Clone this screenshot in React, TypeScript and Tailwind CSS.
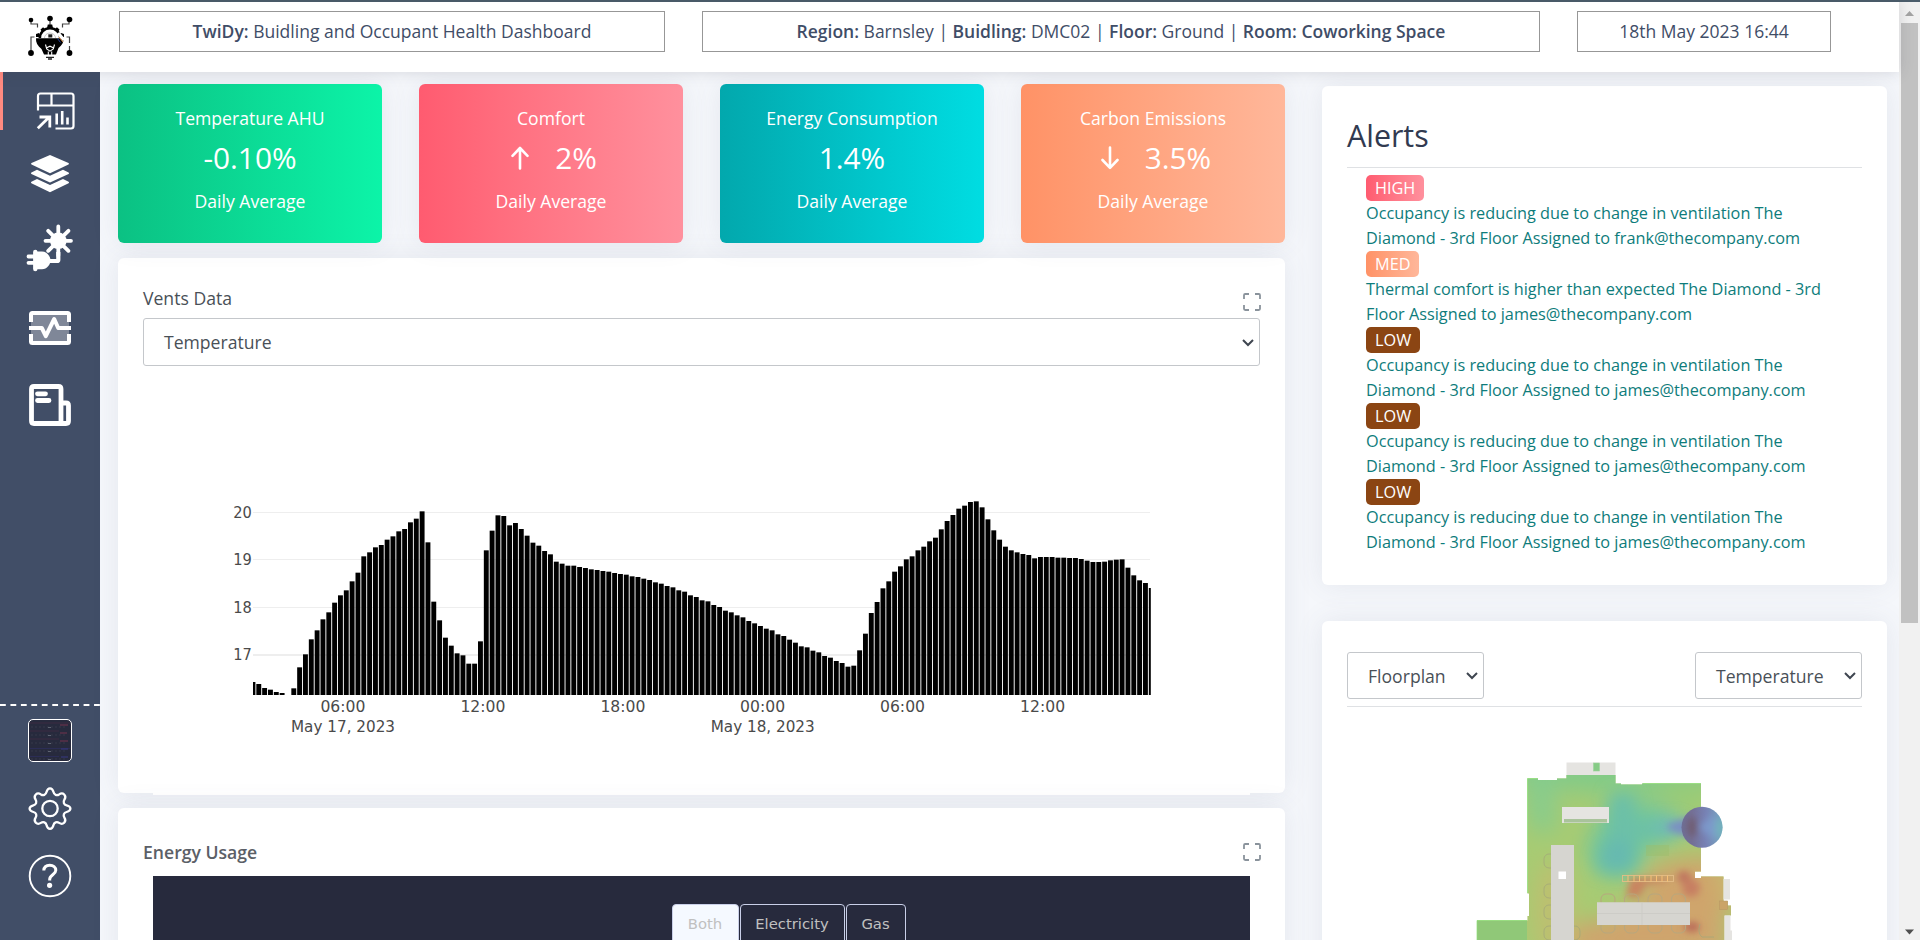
import React from "react";

const BAR_TOPS: (number | null)[] = [
  606, 612, 624, 629, 636, 639, null, 625, 562, 523, 478, 451, 418, 397, 368, 346, 331, 304, 278, 229, 217, 202, 195, 179,
  169, 154, 147, 127, 116, 94, 187, 365, 421, 473, 497, 520, 526, 551, 551, 484, 211, 152, 106, 108, 136, 129, 147, 167,
  188, 197, 213, 223, 245, 251, 257, 257, 261, 264, 268, 270, 273, 275, 279, 282, 284, 289, 291, 296, 300, 307, 311, 318,
  322, 331, 335, 346, 351, 361, 364, 375, 381, 392, 397, 406, 412, 423, 430, 438, 446, 451, 463, 468, 479, 488, 499, 502,
  512, 517, 528, 533, 543, 549, 560, 557, 511, 461, 399, 366, 325, 304, 275, 259, 238, 229, 211, 200, 184, 173, 148, 123,
  105, 86, 77, 66, 64, 82, 118, 151, 179, 200, 211, 217, 222, 225, 235, 231, 231, 231, 233, 233, 234, 234, 237, 242, 246,
  246, 245, 241, 239, 238, 263, 286, 301, 309, 324,
];

const GRID = [
  { y: 512.5, label: "20", w: 1 },
  { y: 559.5, label: "19", w: 1 },
  { y: 607.5, label: "18", w: 1 },
  { y: 655, label: "17", w: 2 },
];

const TIMES = [
  { x: 343, label: "06:00", date: "May 17, 2023" },
  { x: 483, label: "12:00" },
  { x: 623, label: "18:00" },
  { x: 762.7, label: "00:00", date: "May 18, 2023" },
  { x: 902.6, label: "06:00" },
  { x: 1042.7, label: "12:00" },
];

function VentsChart() {
  return (
    <svg
      className="block h-[390px] w-[1117px] font-['DejaVu_Sans',sans-serif]"
      viewBox="143 366 1117 390"
      fontSize="15"
      fill="#4a4a4a"
    >
      <clipPath id="plot">
        <rect x="253" y="480" width="897.8" height="215" />
      </clipPath>
      {GRID.map((g) => (
        <g key={g.label}>
          <rect x="253" y={g.y - g.w / 2} width="897" height={g.w} fill="#eeeeee" />
          <text x="233.3" y={g.y + 5} textLength="18.6" lengthAdjust="spacingAndGlyphs">
            {g.label}
          </text>
        </g>
      ))}
      <g clipPath="url(#plot)" fill="#000">
        {BAR_TOPS.map((t, i) =>
          t === null ? null : (
            <rect key={i} x={250.5 + i * 5.8333} y={480 + t / 3} width="4.9" height={215 - t / 3} />
          ),
        )}
      </g>
      {TIMES.map((t, i) => (
        <g key={i}>
          <text x={t.x - 22.6} y="711.5" textLength="45" lengthAdjust="spacingAndGlyphs">
            {t.label}
          </text>
          {t.date && (
            <text x={t.x - 52} y="731.5" textLength="104" lengthAdjust="spacingAndGlyphs">
              {t.date}
            </text>
          )}
        </g>
      ))}
    </svg>
  );
}

function Logo() {
  return (
    <svg className="block h-[70px] w-[100px]" viewBox="0 2 100 70">
      <g fill="none" stroke="#444" strokeWidth="1.2">
        <path d="M31 20v4h6.500v3.500M69 20v4h-6.500v3.500M50 18v7M31 53V37h3.500M69.500 53V46M66.500 37h3v6" />
      </g>
      <g fill="#000">
        <circle cx="31" cy="20" r="2.300" />
        <circle cx="50" cy="18.500" r="2.800" />
        <circle cx="69.500" cy="19.500" r="2.800" />
        <circle cx="31" cy="53" r="2.900" />
        <circle cx="69.500" cy="53" r="2.900" />
        <path d="M47.800 24.500h4.400l.8 3.500h-6zM40.500 29.500l2.600-2.200 2.800 2.700-3.600 2.500zM59.500 29.500l-2.600-2.200-2.800 2.700 3.600 2.500zM36 34l3-1 1 4h-4zM64 34l-3-1-1 4h4z" />
      </g>
      <path d="M39.800 38a10.200 9.700 0 0 1 20.400 0" fill="#fff" stroke="#000" strokeWidth="2.600" />
      <path d="M44.500 38a5.500 5 0 0 1 11 0" fill="none" stroke="#bbb" strokeWidth=".8" />
      <path d="M48.300 34.300h4V37.500h-4z" fill="#222" />
      <path d="M36 38.300h27.500c.3 3.800-1.300 7-5 9.700l-2.500 6.500H44L41.500 49c-4-3-5.800-6.500-5.500-10.700z" fill="#000" />
      <path d="M45.500 44.500l1.200 4.500 3.300 2.200 3.300-2.200 1.200-4.500M46.800 47.800l3.200-1.600 3.200 1.600M48.300 51.500V55M51.700 51.500V55" fill="none" stroke="#fff" strokeWidth="1.100" />
      <path d="M58 33l6 7" stroke="#fff" strokeWidth="3.400" />
      <path d="M59 37l4 5" stroke="#f5a25b" strokeWidth=".9" />
      <path d="M57.500 38.500l3 4" stroke="#2b49a8" strokeWidth=".9" />
      <path d="M46 57.300h8M48 59h4" stroke="#222" strokeWidth="1.300" />
    </svg>
  );
}

function Sidebar() {
  return (
    <aside className="flex h-[868px] w-[100px] shrink-0 flex-col bg-[#414e67]">
      <svg className="block h-[68px] w-[100px]" viewBox="0 72 100 68">
        <rect x="0" y="72" width="3" height="58" fill="#ff8a80" />
        <g fill="none" stroke="#fff" strokeWidth="2.200">
          <path d="M38 110.500V96q0-2.500 2.500-2.500H71q2.500 0 2.500 2.500v30q0 2.500-2.500 2.500H55.500M38 105.500h35.500M51.500 94v11.500" />
          <path d="M56.700 124.500v-11M62.200 124.500v-13.500M67.500 124.500v-7" strokeWidth="2.600" />
          <path d="M37.800 128.300l11.500-11.300M39.500 117h10.300v10.500" strokeWidth="2.800" />
        </g>
      </svg>
      <svg className="block h-[70px] w-[100px]" viewBox="0 140 100 70" fill="#fff">
        <path d="M50 155l18.500 8q1 .8 0 1.600L50 173.300l-18.500-8.700q-1-.8 0-1.600z" />
        <path d="M37 169.800l13 6 13-6 5.600 2.600q1 .8 0 1.600L50 182.500 31.400 174q-1-.8 0-1.600z" />
        <path d="M37 179.100l13 6 13-6 5.600 2.600q1 .8 0 1.600L50 192.300l-18.600-9q-1-.8 0-1.600z" />
      </svg>
      <svg className="block h-[80px] w-[100px]" viewBox="0 210 100 80">
        <g stroke="#fff" strokeWidth="3.800" strokeLinecap="round" fill="none">
          <path d="M58.300 226.500v29M45.500 240.800H71M48.200 230.800l20.200 20M68.400 230.800l-20.200 20" />
          <path d="M58.300 252v8q0 1-1.300 1h-9" strokeLinecap="butt" strokeWidth="4.200" />
          <path d="M28.500 256.500h7M28.500 262.800h7" />
          <path d="M35.300 252v17" strokeWidth="4.400" />
        </g>
        <circle cx="58.300" cy="240.800" r="8.300" fill="#fff" />
        <path d="M35 251.500h7c5 0 8.500 5 8.500 9s-3.500 8.700-8.500 8.700h-7z" fill="#fff" />
      </svg>
      <svg className="block h-[75px] w-[100px]" viewBox="0 290 100 75">
        <rect x="31" y="313" width="38" height="30" fill="#7f8798" />
        <path
          d="M31 322v-7.500q0-1.500 1.500-1.500h35q1.500 0 1.500 1.500v7.500M31 334v7.500q0 1.500 1.500 1.500h35q1.500 0 1.500-1.500V334"
          fill="none"
          stroke="#fff"
          strokeWidth="4"
        />
        <path d="M29 328h12.800l4 8.200 8.400-17.200 4 9H71" fill="none" stroke="#fff" strokeWidth="4" strokeLinejoin="round" />
      </svg>
      <svg className="block h-[75px] w-[100px]" viewBox="0 365 100 75">
        <path
          d="M61 423.500V389q0-2.500-2.500-2.500H34q-2.500 0-2.500 2.500v32q0 2.500 2.500 2.500h32q2.500 0 2.500-2.500v-15.500q0-2.500-2.500-2.500h-5"
          fill="none"
          stroke="#fff"
          strokeWidth="4.800"
        />
        <path d="M37.500 393.800h8M37.500 400.500h11.500" stroke="#fff" strokeWidth="4.800" strokeLinecap="round" />
      </svg>
      <div className="flex-1" />
      <svg className="block h-[72px] w-[100px]" viewBox="0 698 100 72">
        <path d="M0 705h100" stroke="#fff" strokeWidth="2" strokeDasharray="5.800 4.650" />
        <rect x="28.500" y="719.500" width="43" height="42" rx="4.500" fill="#272a3d" stroke="#fff" />
        <path d="M30 723h40M30 731h29M30 739h29" stroke="#3d2a42" strokeWidth="1" />
        <path d="M30 748.500h40M30 756.500h29" stroke="#2b2d55" strokeWidth="1" />
        <path d="M31 727h36M31 735h36M31 743h36M31 751h36M31 759h36" stroke="#454a58" strokeWidth=".5" strokeDasharray="2 2" />
        <path d="M60 725h8M60 733h7M60 741h8" stroke="#7c3550" strokeWidth="1.500" opacity=".6" />
        <path d="M61 749h7M61 757h7" stroke="#3a3a8a" strokeWidth="1.600" opacity=".6" />
        <path d="M48 727.500h3M48 735.500h3M48 743.500h3M48 751.500h3M48 759.500h3" stroke="#6c7280" strokeWidth=".8" />
      </svg>
      <svg className="block h-[76px] w-[100px]" viewBox="0 770 100 76" fill="none" stroke="#fff" strokeWidth="2.300">
        <circle cx="50" cy="808.500" r="7.700" />
        <path d="M50 788.300c2.600 0 3 1.600 3.500 3.800.6 2.800 3.300 3.700 5.600 2.300 2-1.300 3.600-1.400 5.100.1s1.500 3.200.2 5.200c-1.500 2.300-.6 5 2.200 5.600 2.200.5 3.800.9 3.800 3.300s-1.600 2.900-3.800 3.400c-2.800.6-3.700 3.300-2.200 5.600 1.300 2 1.300 3.600-.2 5.100s-3.100 1.500-5.100.2c-2.300-1.500-5-.6-5.600 2.200-.5 2.200-.9 3.800-3.500 3.800s-3-1.600-3.500-3.800c-.6-2.800-3.300-3.700-5.600-2.200-2 1.300-3.600 1.300-5.100-.2s-1.500-3.100-.2-5.100c1.500-2.300.6-5-2.200-5.600-2.200-.5-3.800-1-3.800-3.400s1.600-2.800 3.800-3.300c2.800-.6 3.700-3.300 2.200-5.600-1.300-2-1.300-3.700.2-5.200s3.100-1.400 5.100-.1c2.300 1.400 5 .5 5.600-2.300.5-2.200.9-3.800 3.500-3.800z" />
      </svg>
      <svg className="block h-[94px] w-[100px]" viewBox="0 846 100 94" fill="none" stroke="#fff">
        <circle cx="50" cy="876" r="20.300" strokeWidth="1.900" />
        <path d="M43.800 870.500c.2-3.600 2.700-5.300 6-5.300 3.400 0 6 1.900 6 5.100 0 4.400-6.100 4.600-6.100 9v1.200" strokeWidth="3" />
        <circle cx="49.600" cy="885.300" r="2.600" fill="#fff" stroke="none" />
      </svg>
    </aside>
  );
}

function Arrow({ down = false }: { down?: boolean }) {
  return (
    <svg className="ml-[6px] block h-6 w-[18px]" viewBox="0 0 18 24" fill="none" stroke="#fff" strokeWidth="2.600" strokeLinecap="round" strokeLinejoin="round">
      {down ? <path d="M9 1.500v20M1.500 14L9 21.800l7.500-7.800" /> : <path d="M9 22.500V2M1.500 9.800L9 2l7.500 7.800" />}
    </svg>
  );
}

function Stat({ title, value, bg, dir }: { title: string; value: string; bg: string; dir?: "up" | "down" }) {
  return (
    <div className={`flex h-[159px] w-[264px] flex-col items-center rounded-md pt-[20px] text-white shadow-[0_0_28px_rgba(82,85,120,0.10)] ${bg}`}>
      <div className="text-[17.600px] leading-[28px]">{title}</div>
      <div className="mt-[4px] flex h-[44px] items-center gap-[26px] text-[29.800px] leading-[44px]">
        {dir && <Arrow down={dir === "down"} />}
        <span>{value}</span>
      </div>
      <div className="mt-[7px] text-[17.600px] leading-[28px]">Daily Average</div>
    </div>
  );
}

function Expand() {
  return (
    <svg className="block h-[18px] w-[18px]" viewBox="0 0 18 18" fill="none" stroke="#8a939c" strokeWidth="1.800">
      <path d="M1 6V2.200Q1 1 2.200 1H6M12 1h3.800Q17 1 17 2.200V6M17 12v3.800q0 1.200-1.200 1.200H12M6 17H2.200Q1 17 1 15.800V12" />
    </svg>
  );
}

function Chevron() {
  return (
    <svg className="block h-[8px] w-[12px]" viewBox="0 0 12 8" fill="none" stroke="#3f4650" strokeWidth="2">
      <path d="M1 1l5 5 5-5" />
    </svg>
  );
}

function Select({ label, className }: { label: string; className: string }) {
  return (
    <div className={`flex items-center justify-between rounded-[3px] border border-[#c4c7cb] pt-px pr-[5px] pl-[20px] text-[17.600px] text-[#495057] ${className}`}>
      <span>{label}</span>
      <Chevron />
    </div>
  );
}

const HIGH = "bg-linear-to-r from-[#ff5b70] to-[#ff909d]";
const MED = "bg-linear-to-r from-[#ff9266] to-[#ffb79a]";

const ALERTS = [
  { level: "HIGH", bg: HIGH, lines: ["Occupancy is reducing due to change in ventilation The", "Diamond - 3rd Floor Assigned to frank@thecompany.com"] },
  { level: "MED", bg: MED, lines: ["Thermal comfort is higher than expected The Diamond - 3rd", "Floor Assigned to james@thecompany.com"] },
  { level: "LOW", bg: "bg-[#8b4513]", lines: ["Occupancy is reducing due to change in ventilation The", "Diamond - 3rd Floor Assigned to james@thecompany.com"] },
  { level: "LOW", bg: "bg-[#8b4513]", lines: ["Occupancy is reducing due to change in ventilation The", "Diamond - 3rd Floor Assigned to james@thecompany.com"] },
  { level: "LOW", bg: "bg-[#8b4513]", lines: ["Occupancy is reducing due to change in ventilation The", "Diamond - 3rd Floor Assigned to james@thecompany.com"] },
];

const CHAIRS = [
  [1608, 900], [1631.500, 900], [1655, 900], [1678.500, 900],
  [1608, 927], [1631.500, 927], [1655, 927], [1678.500, 927],
];

function Floorplan() {
  return (
    <svg className="block h-[233px] w-[515px]" viewBox="1347 707 515 233">
      <defs>
        <filter id="b8" x="-60%" y="-60%" width="220%" height="220%">
          <feGaussianBlur stdDeviation="8" />
        </filter>
        <filter id="b12" x="-60%" y="-60%" width="220%" height="220%">
          <feGaussianBlur stdDeviation="11" />
        </filter>
        <filter id="b3" x="-60%" y="-60%" width="220%" height="220%">
          <feGaussianBlur stdDeviation="3.500" />
        </filter>
        <clipPath id="room">
          <path d="M1527.500 778.500H1538V780H1557V778.500H1566.500V775H1615.500V783.500H1621V784.500H1642V783.500H1701V871.500H1695V878H1701V876.500H1723.500V901H1727.500V905.500H1731V915.500H1724.500V940H1477V920.500H1527.500V916H1529V893.500H1527.500Z" />
        </clipPath>
        <linearGradient id="disc" x1="0" x2="1">
          <stop offset="0" stopColor="#6d6f96" />
          <stop offset=".25" stopColor="#746f95" />
          <stop offset=".6" stopColor="#7782b5" />
          <stop offset="1" stopColor="#75a6bd" />
        </linearGradient>
        <clipPath id="discClip">
          <circle cx="1702" cy="827.300" r="20.500" />
        </clipPath>
      </defs>
      <g clipPath="url(#room)">
        <rect x="1460" y="750" width="300" height="190" fill="#a7cb73" />
        <g filter="url(#b12)">
          <ellipse cx="1610" cy="772" rx="110" ry="22" fill="#83cb87" />
          <ellipse cx="1543" cy="800" rx="16" ry="34" fill="#86cc8d" />
          <ellipse cx="1568" cy="801" rx="17" ry="11" fill="#a6ca72" />
          <ellipse cx="1685" cy="796" rx="26" ry="16" fill="#9acb77" />
          <ellipse cx="1638" cy="825" rx="40" ry="24" fill="#72c69b" />
          <ellipse cx="1616" cy="848" rx="28" ry="30" fill="#72c69b" />
          <path d="M1625 905h70v-52l30 12v90h-150z" fill="#cfa86f" />
          <ellipse cx="1690" cy="890" rx="50" ry="32" fill="#cfa56c" />
          <ellipse cx="1640" cy="940" rx="90" ry="22" fill="#cfa46d" />
          <ellipse cx="1553" cy="915" rx="20" ry="55" fill="#bdbf70" />
          <ellipse cx="1733" cy="884" rx="15" ry="16" fill="#c8ba70" />
        </g>
        <rect x="1477" y="920" width="50" height="20" fill="#90c878" />
        <g filter="url(#b8)">
          <path d="M1610 793h24l2 30 40-4v16l-40 2q4 20-4 35h-32q-8-18 10-36z" fill="#6cc0a8" />
          <ellipse cx="1617" cy="855" rx="15" ry="16" fill="#66b9b0" />
          <ellipse cx="1670" cy="827" rx="16" ry="8" fill="#6db8bd" />
        </g>
        <g filter="url(#b3)">
          <path d="M1704 812l-30 10q-14 5 0 10l30 10z" fill="#7a90c2" />
          <path d="M1630 878h42l-6 4-20 3-6 12h-14z" fill="#c98560" />
          <ellipse cx="1684" cy="877" rx="7" ry="6" fill="#bf765e" />
          <ellipse cx="1691" cy="888" rx="9" ry="9" fill="#c77f62" />
          <ellipse cx="1692" cy="927" rx="8" ry="5" fill="#b96b59" />
        </g>
        <rect x="1646" y="845" width="23" height="11" fill="#9bbb68" opacity=".4" />
      </g>
      <path d="M1527.500 893V778.500h10.500M1643 783.500h58M1477 940v-19.500h50" fill="none" stroke="#8ee077" strokeWidth="1" opacity=".7" />
      <circle cx="1702" cy="827.300" r="20.500" fill="url(#disc)" />
      <g clipPath="url(#discClip)">
        <g filter="url(#b3)">
          <ellipse cx="1692" cy="827" rx="4.500" ry="10" fill="#6f5b70" />
          <path d="M1702 827l12-10v20z" fill="#7d99cb" stroke="#7d99cb" strokeWidth="4" />
          <ellipse cx="1720" cy="828" rx="5" ry="11" fill="#72b2bc" />
        </g>
      </g>
      <g fill="#e5e4e1">
        <path d="M1566.500 762.500h49v12.500h-49zM1562 807h47v16h-47zM1723.500 879h6.500v20.500h-6.500zM1724.500 915.500h6v15h1.500V940h-7.500z" />
      </g>
      <rect x="1593.500" y="763" width="6" height="8" fill="#86cb86" stroke="#9bd49b" strokeWidth=".6" />
      <rect x="1564" y="819" width="43" height="3.500" fill="#a9c39b" />
      <rect x="1719.500" y="901" width="8" height="8.500" fill="#cba468" stroke="#b99a65" strokeWidth=".6" />
      <g fill="none" stroke="#a2a77a" strokeWidth="1" opacity=".75">
        {[861, 891, 912, 933].map((y) => (
          <rect key={y} x="1544" y={y - 7} width="12" height="14" rx="5" />
        ))}
        <rect x="1570" y="926" width="10" height="14" rx="5" />
        <path d="M1700 924q-3 9 2 13h12" />
      </g>
      <g fill="none" stroke="#b7a77f" strokeWidth="1">
        {CHAIRS.map(([x, y], i) => (
          <rect key={i} x={x - 7} y={y - 6} width="14" height="12" rx="5" />
        ))}
      </g>
      <g fill="#d6d5d0">
        <path d="M1551 845h23v95h-23zM1597 902.300h93v22.700h-93z" />
      </g>
      <path d="M1597 913.500h93M1642 903v22" stroke="#cdccc7" strokeWidth="1" />
      <rect x="1558.500" y="871.500" width="7.500" height="7.500" fill="#fff" />
      <g fill="none" stroke="#fcc477" strokeWidth=".9">
        <rect x="1622.500" y="875.500" width="51" height="6" stroke="#e4bd87" />
        <path d="M1628 875.500v6M1634 875.500v6M1639.500 875.500v6M1645 875.500v6M1651 875.500v6M1656.500 875.500v6M1662 875.500v6M1667.500 875.500v6" />
      </g>
    </svg>
  );
}

const CARD = "rounded-md bg-white shadow-[0_0_28px_rgba(82,85,120,0.10)]";

export default function App() {
  return (
    <div className="flex h-[940px] w-[1920px] flex-col overflow-hidden bg-[#f5f7fb] font-['Open_Sans',sans-serif] text-[17.600px] text-[#495057]">
      <div className="h-[2px] shrink-0 bg-[#4b5d6b]" />
      <div className="flex h-[938px]">
        <div className="flex w-[1899px] flex-col">
          <header className="relative z-10 flex h-[70px] shrink-0 items-start bg-white text-[17.500px] text-[#3f4d67] shadow-[0_0_14px_rgba(60,60,80,0.18)]">
            <Logo />
            <div className="mt-[9px] ml-[19px] flex h-[41px] w-[546px] items-center justify-center border border-[#979797] whitespace-pre">
              <b className="font-semibold">TwiDy:</b> Buidling and Occupant Health Dashboard
            </div>
            <div className="mt-[9px] ml-[37px] flex h-[41px] w-[838px] items-center justify-center border border-[#979797] whitespace-pre">
              <b className="font-semibold">Region:</b> Barnsley | <b className="font-semibold">Buidling:</b> DMC02 |{" "}
              <b className="font-semibold">Floor:</b> Ground | <b className="font-semibold">Room: Coworking Space</b>
            </div>
            <div className="mt-[9px] ml-[37px] flex h-[41px] w-[254px] items-center justify-center border border-[#979797]">
              18th May 2023 16:44
            </div>
          </header>
          <div className="flex h-[868px]">
            <Sidebar />
            <main className="flex gap-[37px] pl-[18px]">
              <div className="w-[1167px] pt-[12px]">
                <div className="flex justify-between">
                  <Stat title="Temperature AHU" value="-0.10%" bg="bg-linear-to-r from-[#0bc183] to-[#0cf4a8]" />
                  <Stat title="Comfort" value="2%" dir="up" bg={HIGH} />
                  <Stat title="Energy Consumption" value="1.4%" bg="bg-linear-to-r from-[#02a8ad] to-[#00dde2]" />
                  <Stat title="Carbon Emissions" value="3.5%" dir="down" bg={MED} />
                </div>
                <section className={`mt-[15px] h-[535px] px-[25px] pt-[27px] ${CARD}`}>
                  <div className="flex h-[33px] justify-between">
                    <span className="leading-[27px]">Vents Data</span>
                    <div className="-mr-[1px] pt-[8px]">
                      <Expand />
                    </div>
                  </div>
                  <Select label="Temperature" className="h-[48px]" />
                  <VentsChart />
                  <div className="mt-[36px] ml-[10px] h-[3px] w-[1097px] bg-white" />
                </section>
                <section className={`mt-[15px] h-[160px] px-[25px] pt-[30px] ${CARD}`}>
                  <div className="flex h-[38px] justify-between">
                    <span className="text-[17.600px] leading-[29px] font-semibold text-[#5b6067]">Energy Usage</span>
                    <div className="-mr-[1px] pt-[5px]">
                      <Expand />
                    </div>
                  </div>
                  <div className="ml-[10px] flex h-[100px] w-[1097px] justify-center gap-px bg-[#272a3d] pt-[28px] pl-[174px] font-['DejaVu_Sans',sans-serif] text-[14.800px] text-[#c0c0c0]">
                    <div className="h-[38px] w-[67px] rounded-t-[4px] border border-[#c9cfe8] bg-[#f5f9ff] text-center leading-[38px]">Both</div>
                    <div className="h-[38px] w-[105px] rounded-t-[4px] border border-[#c9cfe8] text-center leading-[38px]">Electricity</div>
                    <div className="h-[38px] w-[60px] rounded-t-[4px] border border-[#c9cfe8] text-center leading-[38px]">Gas</div>
                  </div>
                </section>
              </div>
              <div className="w-[565px] pt-[14px]">
                <section className={`h-[499px] px-[25px] pt-[25px] ${CARD}`}>
                  <h2 className="h-[57px] border-b border-[#dfe1e4] text-[30.400px] leading-[49px] text-[#313a50]">Alerts</h2>
                  <div className="pt-[7px] pl-[19px] text-[16.280px] text-[#0e7c7b]">
                    {ALERTS.map((a, i) => (
                      <div key={i} className="h-[76px] whitespace-nowrap">
                        <span className={`block h-[26px] w-fit rounded-[5px] px-[9px] leading-[26px] text-white ${a.bg}`}>{a.level}</span>
                        {a.lines.map((l) => (
                          <p key={l} className="leading-[25px]">
                            {l}
                          </p>
                        ))}
                      </div>
                    ))}
                  </div>
                </section>
                <section className={`mt-[36px] h-[400px] px-[25px] pt-[31px] ${CARD}`}>
                  <div className="flex h-[55px] justify-between border-b border-[#dfe1e4]">
                    <Select label="Floorplan" className="h-[47px] w-[137px]" />
                    <Select label="Temperature" className="h-[47px] w-[167px]" />
                  </div>
                  <Floorplan />
                </section>
              </div>
            </main>
          </div>
        </div>
        <div className="flex w-[21px] flex-col bg-[#f1f1f1] pl-[2px]">
          <svg className="block h-[21px] w-[17px]" viewBox="0 0 17 21">
            <path d="M4 14l4.500-5 4.500 5z" fill="#a3a3a3" />
          </svg>
          <div className="h-[600px] w-[17px] bg-[#c1c1c1]" />
          <div className="flex-1" />
          <svg className="block h-[17px] w-[17px]" viewBox="0 0 17 17">
            <path d="M4 6.500l4.500 5 4.500-5z" fill="#505050" />
          </svg>
        </div>
      </div>
    </div>
  );
}
